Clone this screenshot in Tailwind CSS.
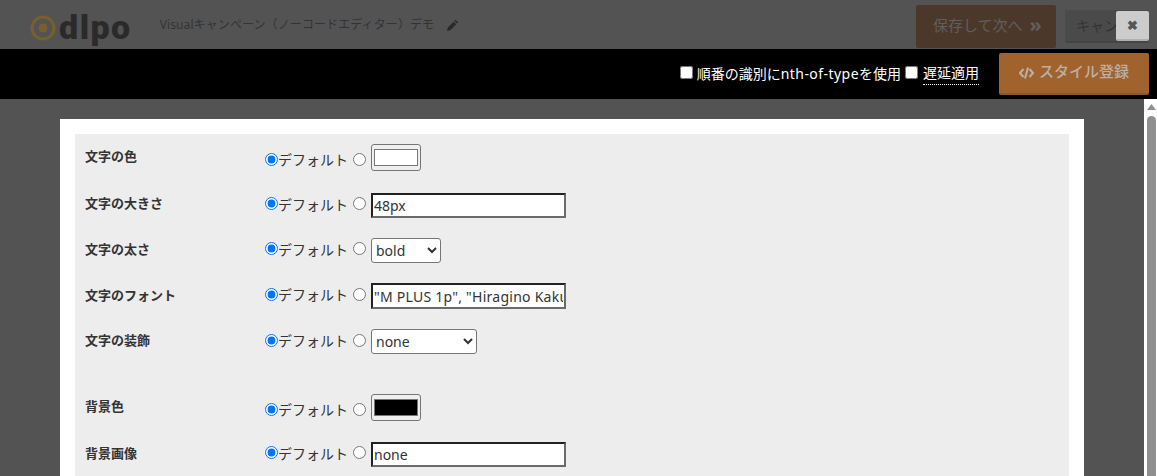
<!DOCTYPE html>
<html lang="ja">
<head>
  <meta charset="UTF-8" />
  <meta name="viewport" content="width=device-width, initial-scale=1.0" />
  <script src="https://cdn.jsdelivr.net/npm/@tailwindcss/browser@4"></script>
  <title>Visualキャンペーン</title>
</head>
<body class="relative h-screen overflow-hidden bg-[#535353] font-['Noto_Sans','Noto_Sans_CJK_JP',sans-serif] text-[14px] text-[#333]">

  <!-- Dimmed page header -->
  <header class="flex h-[49px] items-start">
    <div class="ml-[30px] mt-[15px] flex items-center">
      <svg class="h-[26px] w-[26px]" viewBox="0 0 26 26">
        <circle cx="13" cy="13" r="11" fill="none" stroke="#77602e" stroke-width="3" />
        <circle cx="13" cy="13" r="4.5" fill="#77602e" />
      </svg>
      <span class="ml-[3px] -mt-[3px] font-['Roboto',sans-serif] text-[34px] leading-[26px] font-black tracking-[1.5px] text-[#2a2a2a]">dlpo</span>
    </div>
    <div class="ml-[28px] mt-[16px] flex items-center text-[12px] leading-[18px] tracking-[0.1px] text-[#333]">
      <span>Visualキャンペーン（ノーコードエディター）デモ</span>
      <svg class="ml-[13px] h-[12px] w-[12px]" viewBox="0 0 12 12"><path fill="#2a2a2a" d="M8.6.8l2.6 2.6-1.2 1.2-2.6-2.6zM6.7 2.7l2.6 2.6L3.4 11.2 0 12l.8-3.400z" /></svg>
    </div>
    <div class="ml-auto mr-[8px] flex items-start">
      <button class="mt-[5px] flex h-[43px] w-[140px] items-center rounded-[2px] bg-[#4c382a] pb-[3px] pl-[17px] text-[15px] text-[#5f5f5f]">保存して次へ<span class="ml-[7px] text-[20px] leading-none font-bold">»</span></button>
      <button class="ml-[9px] mt-[10px] h-[33px] w-[84px] overflow-hidden rounded-[2px] border-b-2 border-[#444] bg-[#4a4a4a] pl-[11px] text-left text-[14px] whitespace-nowrap text-[#333]">キャンセル</button>
    </div>
  </header>

  <button class="absolute left-[1116px] top-[11px] h-[30px] w-[33px] rounded-[2px] border-b-2 border-[#b0b0b0] bg-[#ccc] text-[13px] leading-none font-bold text-[#555]">✖</button>

  <!-- Style toolbar -->
  <div class="flex h-[50px] items-center justify-end bg-black pr-[8px] text-white">
    <input type="checkbox" class="mb-[3px] h-[13px] w-[13px]" />
    <span class="ml-[4px] -mt-[2px]">順番の識別に<span class="tracking-[0.45px]">nth-of-type</span>を使用</span>
    <input type="checkbox" class="ml-[4px] mb-[3px] h-[13px] w-[13px]" />
    <span class="ml-[5px] mt-[1px] border-b border-dotted border-white pb-[2px] leading-[18px]">遅延適用</span>
    <button class="ml-[20px] flex h-[42px] w-[150px] items-center justify-center rounded-[2px] border-b-2 border-[#8f5728] bg-[#a0632e] pb-[3px] text-[15px] font-medium text-[#bcb0a6]">
      <svg class="mr-[5px] mt-[3px] h-[12px] w-[15px]" viewBox="0 0 15 12" fill="none" stroke="#bcb0a6" stroke-width="2"><path d="M4.5 2L1 6l3.5 4M10.500 2L14 6l-3.500 4M9 .5L6 11.500" /></svg>
      スタイル登録
    </button>
  </div>

  <div class="flex h-[377px] overflow-hidden">
    <main class="flex-1 px-[60px] pt-[20px]">
      <div class="bg-white p-[15px]">
        <div class="bg-[#ededed]">

          <div class="flex h-[47px] rounded-[2px] pl-[10px]">
            <label class="mt-[12px] w-[180px] text-[13px] leading-[20px] font-bold">文字の色</label>
            <div class="mt-[10px] flex h-[27px] items-center">
              <input type="radio" name="color" checked class="mt-[3px] h-[13px] w-[13px]" />
              <span class="mt-[5px] w-[70px] leading-[20px]">デフォルト</span>
              <input type="radio" name="color" class="ml-[5px] mt-[3px] h-[13px] w-[13px]" />
              <input type="color" value="#ffffff" class="ml-[5px] h-[27px] w-[50px] rounded-[3px] border border-[#767676] bg-[#efefef] p-0" />
            </div>
          </div>

          <div class="flex h-[46px] rounded-[2px] pl-[10px]">
            <label class="mt-[12px] w-[180px] text-[13px] leading-[20px] font-bold">文字の大きさ</label>
            <div class="mt-[12px] flex h-[25px] items-center">
              <input type="radio" name="size" checked class="mb-[4px] h-[13px] w-[13px]" />
              <span class="mb-[2px] w-[70px] leading-[20px]">デフォルト</span>
              <input type="radio" name="size" class="ml-[5px] mb-[4px] h-[13px] w-[13px]" />
              <input type="text" value="48px" class="ml-[5px] h-[25px] w-[195px] border-2 border-t-[#222] border-r-[#6b6b6b] border-b-[#6b6b6b] border-l-[#222] bg-white px-[1px]" />
            </div>
          </div>

          <div class="flex h-[46px] rounded-[2px] pl-[10px]">
            <label class="mt-[12px] w-[180px] text-[13px] leading-[20px] font-bold">文字の太さ</label>
            <div class="mt-[11px] flex h-[25px] items-center">
              <input type="radio" name="weight" checked class="mb-[4px] h-[13px] w-[13px]" />
              <span class="mb-[2px] w-[70px] leading-[20px]">デフォルト</span>
              <input type="radio" name="weight" class="ml-[5px] mb-[4px] h-[13px] w-[13px]" />
              <select class="ml-[5px] h-[25px] w-[70px] rounded-[3px] border border-[#767676] bg-white"><option>bold</option></select>
            </div>
          </div>

          <div class="flex h-[45px] rounded-[2px] pl-[10px]">
            <label class="mt-[12px] w-[180px] text-[13px] leading-[20px] font-bold">文字のフォント</label>
            <div class="mt-[10px] flex h-[26px] items-center">
              <input type="radio" name="font" checked class="mb-[4px] h-[13px] w-[13px]" />
              <span class="mb-[2px] w-[70px] leading-[20px]">デフォルト</span>
              <input type="radio" name="font" class="ml-[5px] mb-[4px] h-[13px] w-[13px]" />
              <input type="text" value='"M PLUS 1p", "Hiragino Kaku Gothic ProN", Meiryo' class="ml-[5px] h-[26px] w-[195px] border-2 border-t-[#222] border-r-[#6b6b6b] border-b-[#6b6b6b] border-l-[#222] bg-white px-[1px] tracking-[0.25px]" />
            </div>
          </div>

          <div class="flex h-[46px] rounded-[2px] pl-[10px]">
            <label class="mt-[12px] w-[180px] text-[13px] leading-[20px] font-bold">文字の装飾</label>
            <div class="mt-[11px] flex h-[25px] items-center">
              <input type="radio" name="deco" checked class="mb-[2px] h-[13px] w-[13px]" />
              <span class="mb-[2px] w-[70px] leading-[20px]">デフォルト</span>
              <input type="radio" name="deco" class="ml-[5px] mb-[2px] h-[13px] w-[13px]" />
              <select class="ml-[5px] h-[25px] w-[106px] rounded-[3px] border border-[#767676] bg-white"><option>none</option></select>
            </div>
          </div>

          <div class="flex h-[67px] rounded-[2px] pl-[10px]">
            <label class="mt-[32px] w-[180px] text-[13px] leading-[20px] font-bold">背景色</label>
            <div class="mt-[30px] flex h-[27px] items-center">
              <input type="radio" name="bg" checked class="mt-[3px] h-[13px] w-[13px]" />
              <span class="mt-[5px] w-[70px] leading-[20px]">デフォルト</span>
              <input type="radio" name="bg" class="ml-[5px] mt-[3px] h-[13px] w-[13px]" />
              <input type="color" value="#000000" class="ml-[5px] h-[27px] w-[50px] rounded-[3px] border border-[#767676] bg-[#efefef] p-0" />
            </div>
          </div>

          <div class="flex h-[46px] rounded-[2px] pl-[10px]">
            <label class="mt-[12px] w-[180px] text-[13px] leading-[20px] font-bold">背景画像</label>
            <div class="mt-[11px] flex h-[25px] items-center">
              <input type="radio" name="img" checked class="mb-[4px] h-[13px] w-[13px]" />
              <span class="mb-[2px] w-[70px] leading-[20px]">デフォルト</span>
              <input type="radio" name="img" class="ml-[5px] mb-[4px] h-[13px] w-[13px]" />
              <input type="text" value="none" class="ml-[5px] h-[25px] w-[195px] border-2 border-t-[#222] border-r-[#6b6b6b] border-b-[#6b6b6b] border-l-[#222] bg-white px-[1px]" />
            </div>
          </div>

        </div>
      </div>
    </main>

    <!-- Scrollbar -->
    <aside class="flex w-[13px] flex-col items-center bg-white pl-[1px]">
      <svg class="mt-[5px] h-[6px] w-[9px]" viewBox="0 0 9 6"><path fill="#8f8f8f" d="M4.500 0L9 6H0z" /></svg>
      <div class="mt-[6px] w-[9px] flex-1 rounded-t-[5px] bg-[#8f8f8f]"></div>
    </aside>
  </div>

</body>
</html>
